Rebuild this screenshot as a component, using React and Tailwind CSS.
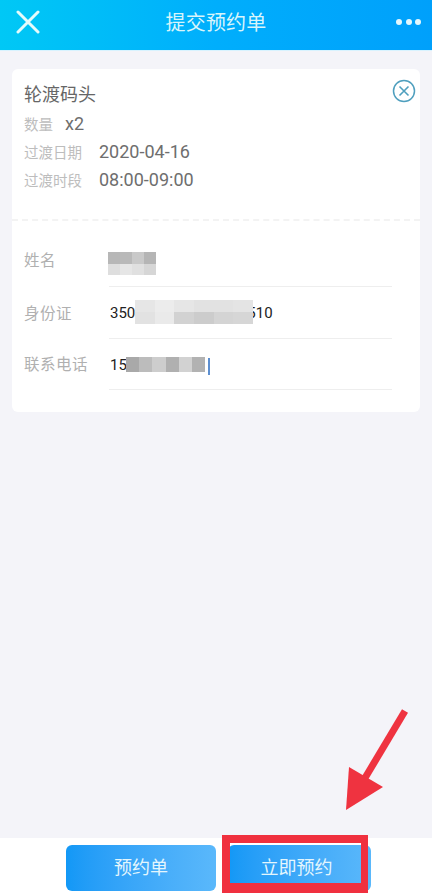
import React from "react";

// pixelated censor patch, colours are read left to right, row by row
const Mosaic = ({ className, cols, cells }) => (
  <div className={`absolute grid ${cols} ${className}`}>
    {cells.map((c, i) => (
      <div key={i} style={{ backgroundColor: c }} />
    ))}
  </div>
);

const InfoRow = ({ label, value, valueClass = "ml-[17px]" }) => (
  <div className="flex h-[28px]">
    <span className="text-[14.5px] leading-[30px] text-[#bdbdbd]">{label}</span>
    <span className={`text-[18px] leading-[26px] text-[#6e6e6e] ${valueClass}`}>{value}</span>
  </div>
);

const FormRow = ({ label, labelClass = "", children }) => (
  <div className="flex items-center h-[51.5px]">
    <span className={`w-[85px] shrink-0 text-[15.5px] tracking-[0.5px] text-[#b0b0b0] ${labelClass}`}>{label}</span>
    <div className="relative flex-1 h-full flex items-center border-b border-[#eeeeee] pl-[1px] pt-[2px] text-[15px] text-[#222222]">
      {children}
    </div>
  </div>
);

export default function App() {
  return (
    <div className="relative w-[432px] h-[893px] flex flex-col overflow-hidden bg-[#f4f4f9] font-['Roboto','Noto_Sans_CJK_SC',sans-serif]">
      {/* Header */}
      <header className="h-[51px] shrink-0 flex items-center bg-gradient-to-r from-[#00c8f5] via-[#00aefc] to-[#00a0fb] border-b border-[#d8f3ff]">
        <div className="w-[70px] pl-[16px]">
          <svg width="24" height="24" viewBox="0 0 24 24" className="-mt-[6px]">
            <path d="M2 2 L22 22 M22 2 L2 22" stroke="#e4fbfb" strokeWidth="3" strokeLinecap="round" />
          </svg>
        </div>
        <h1 className="flex-1 text-center text-[20px] text-[#d8f5fb] tracking-[0.2px] -mt-[4px]">提交预约单</h1>
        <div className="w-[70px] pr-[11px] flex justify-end gap-[3.5px] -mt-[6px]">
          <span className="w-[6px] h-[6px] rounded-full bg-[#e4f7fd]" />
          <span className="w-[6px] h-[6px] rounded-full bg-[#e4f7fd]" />
          <span className="w-[6px] h-[6px] rounded-full bg-[#e4f7fd]" />
        </div>
      </header>

      {/* Content */}
      <main className="flex-1 px-[12px] pt-[18px]">
        <section className="relative h-[150px] bg-white rounded-t-[6px] pl-[12px] pt-[11px]">
          <h2 className="text-[18px] leading-[30px] text-[#666666]">轮渡码头</h2>
          <div className="mt-[1px]">
            <InfoRow label="数量" value="x2" valueClass="ml-[12px]" />
            <InfoRow label="过渡日期" value="2020-04-16" />
            <InfoRow label="过渡时段" value="08:00-09:00" />
          </div>
          <svg width="24" height="24" viewBox="0 0 24 24" className="absolute right-[4px] top-[10px]">
            <circle cx="12" cy="12" r="10.5" fill="none" stroke="#4f9fbe" strokeWidth="1.5" />
            <path d="M7.5 7.5 L16.5 16.5 M16.5 7.5 L7.5 16.5" stroke="#4f9fbe" strokeWidth="1.6" />
          </svg>
        </section>

        {/* dashed divider between the two card halves */}
        <div className="h-[3px] bg-white border-t-2 border-dashed border-[#f3f3f3]" />

        <section className="h-[190px] bg-white rounded-b-[6px] pl-[12px] pr-[28px] pt-[13.5px]">
          <FormRow label="姓名">
            <Mosaic
              className="-left-[1px] top-[16.5px] w-[48px] h-[23px] rounded-bl-[6px]"
              cols="grid-cols-4"
              cells={["#b7b7b7", "#b9b9b9", "#c9c9c9", "#b5b5b5", "#dedede", "#e6e6e6", "#e0e0e0", "#d6d6d6"]}
            />
          </FormRow>
          <FormRow label="身份证" labelClass="pt-[4px]">
            <span>350</span>
            <span className="ml-[112px]">510</span>
            <Mosaic
              className="left-[26px] top-[13px] w-[118px] h-[24px] rounded-t-[8px]"
              cols="grid-cols-6"
              cells={[
                "#e6e6e6", "#ececec", "#e6e6e6", "#e2e2e2", "#e2e2e2", "#e4e4e4",
                "#e2e2e2", "#eaeaea", "#d2d2d2", "#cccccc", "#d4d4d4", "#d6d6d6",
              ]}
            />
          </FormRow>
          <FormRow label="联系电话" labelClass="pt-[2px]">
            <span>15</span>
            <Mosaic
              className="left-[17px] top-[18.5px] w-[79px] h-[15px]"
              cols="grid-cols-6"
              cells={["#a9a9a9", "#bcbcbc", "#cdcdcd", "#b0b0b0", "#d2d2d2", "#b2b2b2"]}
            />
            <span className="absolute left-[99px] top-[19.5px] w-[2px] h-[17px] bg-[#5d8fd0]" />
          </FormRow>
        </section>
      </main>

      {/* Footer */}
      <footer className="h-[55px] shrink-0 bg-white flex items-center pl-[66px] pt-[4px] gap-[12px]">
        <button className="w-[150px] h-[46px] rounded-[6px] bg-gradient-to-r from-[#1298f6] to-[#5ab8fb] text-[18px] text-[#e4f6fd]">
          预约单
        </button>
        <button className="w-[143px] h-[46px] rounded-[6px] pr-[6px] bg-gradient-to-r from-[#1298f6] to-[#5ab8fb] text-[18px] text-[#e4f6fd]">
          立即预约
        </button>
      </footer>

      {/* Red annotation: box round the button and arrow */}
      <div className="absolute left-[222px] top-[835px] w-[146px] h-[58px] border-l-[8px] border-r-[7px] border-t-[8px] border-b-[10px] border-[#f0303f]" />
      <svg width="70" height="112" viewBox="0 0 70 112" className="absolute left-[342px] top-[708px]">
        <path d="M63 3 L20 75" stroke="#ef3340" strokeWidth="7" />
        <polygon points="7,59 41,79 4,102" fill="#ef3340" />
      </svg>
    </div>
  );
}
